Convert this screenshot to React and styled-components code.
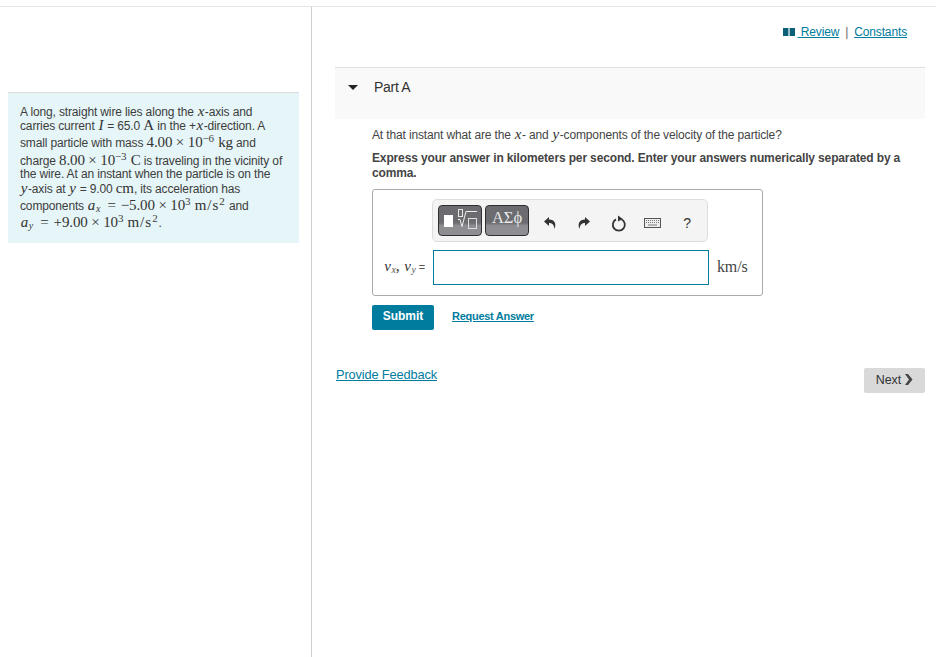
import React from 'react'
import styled, { createGlobalStyle } from 'styled-components'

const GlobalStyle = createGlobalStyle`
html, body { margin:0; padding:0; background:#fff; }
body { font-family:"Liberation Sans", Arial, sans-serif; color:#333; letter-spacing:-0.14px; }
* { box-sizing:border-box; }
`

const Page = styled.div`
width:936px;
height:657px;
overflow:hidden;
padding-top:6px;
`

const Columns = styled.div`
display:flex;
height:651px;
border-top:1px solid #e3e3e3;
`

const LeftColumn = styled.aside`
width:312px;
flex:none;
border-right:1px solid #cfcfcf;
padding:85px 12px 0 8px;
`

const Problem = styled.div`
background:#e6f5f7;
border-top:1px solid #dcdcdc;
height:151px;
padding:11px 12px 0 12px;
font-size:12px;
color:#3d3d3d;
`

const Line = styled.div`
height:${p => p.$h || 14}px;
line-height:14px;
padding-top:${p => p.$top || 0}px;
white-space:nowrap;
`

const M = styled.span`
font-family:"Liberation Serif", serif;
font-size:${p => p.$size || 15}px;
font-style:${p => p.$it ? 'italic' : 'normal'};
margin:0 ${p => p.$it ? 0.7 : 0}px;
color:#333;
`

const Unit = styled(M)`
letter-spacing:1px;
`

const Eq = styled(M)`
margin:0 5px 0 4px;
`

const Sup = styled.sup`
font-family:"Liberation Serif", serif;
font-size:11px;
line-height:0;
margin-right:1px;
vertical-align:5px;
`

const Sub = styled.sub`
font-family:"Liberation Serif", serif;
font-style:italic;
font-size:10px;
line-height:0;
vertical-align:-2px;
`

const RightColumn = styled.main`
flex:1;
padding:0 11px 0 23px;
`

const TopLinks = styled.div`
display:flex;
justify-content:flex-end;
align-items:center;
height:60px;
padding:0 18px 10px 0;
font-size:12px;
color:#666;
gap:6px;
`

const Link = styled.a`
color:#007c9e;
text-decoration:underline;
font-size:${p => p.$size || 12}px;
font-weight:${p => p.$bold ? 700 : 400};
`

const RequestLink = styled(Link)`
margin-bottom:3px;
letter-spacing:-0.28px;
`

const FeedbackLink = styled(Link)`
margin-left:1px;
`

const ReviewLink = styled(Link)`
display:inline-flex;
align-items:center;
white-space:pre;
`

const ReviewIconWrap = styled.span`
display:inline-flex;
margin-right:3px;
`

const PartHeader = styled.div`
display:flex;
height:52px;
padding:12px 0 0 13px;
gap:16px;
background:#f9f9f9;
border-top:1px solid #e0e0e0;
font-size:14px;
letter-spacing:-0.3px;
color:#333;
`

const PartTitle = styled.span`
line-height:15px;
`

const Arrow = styled.span`
width:0;
height:0;
margin-top:5px;
border-left:5px solid transparent;
border-right:5px solid transparent;
border-top:5px solid #222;
`

const Body = styled.div`
padding:8px 0 0 37px;
font-size:12px;
`

const Question = styled.p`
margin:0;
line-height:14px;
color:#444;
`

const Instruction = styled.p`
margin:9px 0 0;
line-height:15px;
font-weight:700;
color:#444;
`

const AnswerBox = styled.div`
width:391px;
height:107px;
margin-top:8px;
border:1px solid #aaa;
border-radius:3px;
padding:9px 0 0 8px;
`

const Toolbar = styled.div`
display:flex;
align-items:center;
width:276px;
height:43px;
margin-left:51px;
padding:0 0 0 5px;
background:#f4f4f4;
border:1px solid #ddd;
border-radius:5px;
`

const TemplateButton = styled.div`
display:flex;
align-items:center;
justify-content:center;
width:44px;
height:31px;
margin-right:${p => p.$text ? 4 : 3}px;
padding-bottom:${p => p.$text ? 5 : 0}px;
background:linear-gradient(#6c6c70 0 58%, #8e8e92 68% 100%);
border:1px solid #2f2f2f;
border-radius:4px;
color:#e8e8e8;
font-family:"Liberation Serif", serif;
font-size:16.500px;
letter-spacing:0;
`

const ToolIcon = styled.span`
display:flex;
align-items:center;
justify-content:center;
width:34.250px;
height:20px;
margin-top:5px;
color:#333;
font-size:14px;
`

const InputRow = styled.div`
display:flex;
align-items:center;
margin-top:8px;
`

const VarLabel = styled.div`
display:flex;
justify-content:flex-end;
align-items:baseline;
width:52px;
padding:0 8px 4px 0;
font-size:11px;
color:#555;
white-space:pre;
`

const AnswerInput = styled.input`
width:276px;
height:35px;
border:1px solid #007c9e;
background:#fff;
outline:none;
`

const UnitLabel = styled.span`
margin:0 0 2px 8px;
font-family:"Liberation Serif", serif;
font-size:16px;
color:#444;
`

const Actions = styled.div`
display:flex;
align-items:center;
gap:18px;
margin-top:9px;
`

const SubmitButton = styled.button`
width:62px;
height:25px;
padding:0 0 3px;
background:#007c9e;
border:none;
border-radius:2px;
color:#fff;
font:700 12px "Liberation Sans", sans-serif;
`

const Footer = styled.div`
display:flex;
justify-content:space-between;
align-items:flex-start;
margin-top:37px;
`

const NextButton = styled.button`
display:flex;
align-items:center;
justify-content:center;
gap:3px;
width:61px;
height:25px;
margin-top:1px;
padding:0 0 2px;
background:#d9d9d9;
border:none;
border-radius:2px;
color:#333;
font:400 12.500px "Liberation Sans", sans-serif;
`

const BookIcon = () => (
  <svg width="12" height="8" viewBox="0 0 12 8">
    <rect x="0" y="0" width="5.400" height="8" fill="#0b5f78" />
    <rect x="6.600" y="0" width="5.400" height="8" fill="#0b5f78" />
  </svg>
)

const TemplateIcon = () => (
  <svg width="38" height="24" viewBox="0 0 38 24" fill="none">
    <rect x="3" y="6" width="9" height="12" fill="#fff" />
    <rect x="17.500" y=".5" width="4" height="7" stroke="#e6e6e6" />
    <path d="M17 10.500l2 0 2 7 4-15h11" stroke="#eee" />
    <rect x="27.500" y="9.500" width="8" height="10" stroke="#ddd" />
  </svg>
)

const UndoIcon = ({ flip }) => (
  <svg width="14" height="14" viewBox="0 0 14 14" style={flip ? { transform: 'scaleX(-1)' } : undefined}>
    <path d="M6 1L1 5.500 6 10V7C9 7 11 8.500 11.500 13 13.500 8 12 3.500 6 3.500Z" fill="#333" />
  </svg>
)

const ResetIcon = () => (
  <svg width="16" height="17" viewBox="0 0 16 17" fill="none">
    <path d="M10.500 4.300a6 6 0 1 1-5.500.1" stroke="#333" strokeWidth="1.800" />
    <path d="M7 .5l4.800 3.500L7 6.500z" fill="#333" />
  </svg>
)

const KeyboardIcon = () => (
  <svg width="17" height="10" viewBox="0 0 17 10">
    <rect x=".5" y=".5" width="16" height="9" fill="#eee" stroke="#555" />
    <path d="M2 2.500h13M2 4.500h13" stroke="#777" strokeDasharray="1 1" />
    <path d="M4 7h9" stroke="#777" />
  </svg>
)

const ChevronIcon = () => (
  <svg width="9" height="11" viewBox="0 0 9 11">
    <path d="M1 0h3l4.500 5.500L4 11H1l4-5.500z" fill="#444" />
  </svg>
)

export default function App() {
  return (
    <Page>
      <GlobalStyle />
      <Columns>
        <LeftColumn>
          <Problem>
            <Line>A long, straight wire lies along the <M $it>x</M>-axis and</Line>
            <Line>carries current <M $it>I</M> = 65.0 <M>A</M> in the +<M $it>x</M>-direction. A</Line>
            <Line $h={18} $top={3}>small particle with mass <M>4.00 × 10</M><Sup>−6</Sup> <M>kg</M> and</Line>
            <Line $h={17} $top={3}>charge <M>8.00 × 10</M><Sup>−3</Sup> <M>C</M> is traveling in the vicinity of</Line>
            <Line>the wire. At an instant when the particle is on the</Line>
            <Line><M $it>y</M>-axis at <M $it>y</M> = 9.00 <M>cm</M>, its acceleration has</Line>
            <Line $h={17} $top={3}>components <M $it>a</M><Sub>x</Sub> <Eq>=</Eq><M>−5.00 × 10</M><Sup>3</Sup> <Unit>m/s</Unit><Sup>2</Sup> and</Line>
            <Line $h={17} $top={3}><M $it>a</M><Sub>y</Sub> <Eq>=</Eq><M>+9.00 × 10</M><Sup>3</Sup> <Unit>m/s</Unit><Sup>2</Sup>.</Line>
          </Problem>
        </LeftColumn>
        <RightColumn>
          <TopLinks>
            <ReviewLink><ReviewIconWrap><BookIcon /></ReviewIconWrap> Review</ReviewLink>
            <span>|</span>
            <Link>Constants</Link>
          </TopLinks>
          <PartHeader>
            <Arrow />
            <PartTitle>Part A</PartTitle>
          </PartHeader>
          <Body>
            <Question>At that instant what are the <M $it>x</M>- and <M $it>y</M>-components of the velocity of the particle?</Question>
            <Instruction>Express your answer in kilometers per second. Enter your answers numerically separated by a comma.</Instruction>
            <AnswerBox>
              <Toolbar>
                <TemplateButton><TemplateIcon /></TemplateButton>
                <TemplateButton $text>ΑΣϕ</TemplateButton>
                <ToolIcon><UndoIcon /></ToolIcon>
                <ToolIcon><UndoIcon flip /></ToolIcon>
                <ToolIcon><ResetIcon /></ToolIcon>
                <ToolIcon><KeyboardIcon /></ToolIcon>
                <ToolIcon>?</ToolIcon>
              </Toolbar>
              <InputRow>
                <VarLabel><span><M $it>v</M><Sub>x</Sub><M $size={16}>, </M><M $it>v</M><Sub>y</Sub> =</span></VarLabel>
                <AnswerInput />
                <UnitLabel>km/s</UnitLabel>
              </InputRow>
            </AnswerBox>
            <Actions>
              <SubmitButton>Submit</SubmitButton>
              <RequestLink $size={11} $bold>Request Answer</RequestLink>
            </Actions>
          </Body>
          <Footer>
            <FeedbackLink $size={12.8}>Provide Feedback</FeedbackLink>
            <NextButton>Next <ChevronIcon /></NextButton>
          </Footer>
        </RightColumn>
      </Columns>
    </Page>
  )
}
